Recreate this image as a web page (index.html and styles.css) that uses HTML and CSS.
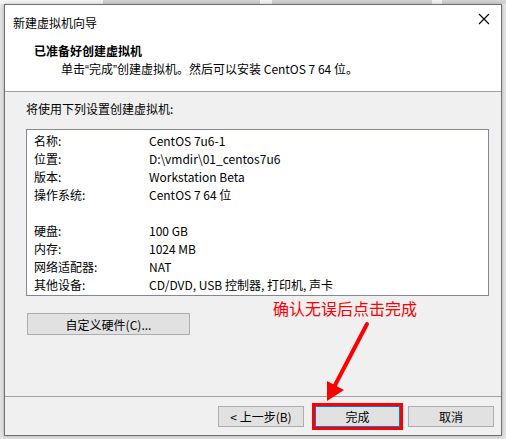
FILE: index.html
```html
<!DOCTYPE html>
<html lang="zh-CN">
<head>
    <meta charset="UTF-8">
    <title>新建虚拟机向导</title>
    <link rel="stylesheet" href="styles.css">
</head>
<body>

<div class="desk">
    <span class="tile tile-a"></span>
    <span class="tile tile-b"></span>
    <span class="tile tile-c"></span>
</div>

<div class="window">
    <div class="titlebar">
        <span class="title">新建虚拟机向导</span>
        <svg class="close" width="12" height="12" viewBox="0 0 12 12">
            <path d="M1 1 L11 11 M11 1 L1 11" stroke="#000" stroke-width="1.1" fill="none"/>
        </svg>
    </div>

    <div class="header">
        <div class="header-title">已准备好创建虚拟机</div>
        <div class="header-sub">单击<span class="q">“</span>完成<span class="q">”</span>创建虚拟机。然后可以安装 CentOS 7 64 位。</div>
    </div>

    <div class="body">
        <div class="intro">将使用下列设置创建虚拟机:</div>

        <div class="summary">
            <div class="row"><span class="key">名称:</span><span>CentOS 7u6-1</span></div>
            <div class="row"><span class="key">位置:</span><span>D:\vmdir\01_centos7u6</span></div>
            <div class="row"><span class="key">版本:</span><span>Workstation Beta</span></div>
            <div class="row"><span class="key">操作系统:</span><span>CentOS 7 64 位</span></div>
            <div class="row"></div>
            <div class="row"><span class="key">硬盘:</span><span>100 GB</span></div>
            <div class="row"><span class="key">内存:</span><span>1024 MB</span></div>
            <div class="row"><span class="key">网络适配器:</span><span>NAT</span></div>
            <div class="row"><span class="key">其他设备:</span><span>CD/DVD, USB 控制器, 打印机, 声卡</span></div>
        </div>

        <button class="btn btn-custom">自定义硬件(C)...</button>

        <div class="note">确认无误后点击完成</div>
        <svg class="arrow" width="60" height="90" viewBox="0 0 60 90">
            <path d="M55 3 L21 68" stroke="#ff0000" stroke-width="4" stroke-linecap="round" fill="none"/>
            <path d="M15 80 L15 60 L32 69 Z" fill="#ff0000"/>
        </svg>
    </div>

    <div class="footer">
        <button class="btn btn-back">&lt; 上一步(B)</button>
        <button class="btn btn-finish">完成</button>
        <button class="btn btn-cancel">取消</button>
    </div>
</div>

</body>
</html>
```

FILE: styles.css
```css
body {
    margin: 0;
    background-color: #e4e4e4;
    font-family: "Noto Sans CJK SC", "Microsoft YaHei", sans-serif;
    font-size: 12px;
    color: #000;
    width: 506px;
    height: 439px;
    overflow: hidden;
    position: relative;
}
.desk {
    height: 4px;
    background-color: #f6f6f6;
    position: relative;
}
.tile {
    position: absolute;
    top: 0;
    height: 4px;
    background-color: #d4d4d4;
}
.tile-a { left: 103px; width: 157px; }
.tile-b { left: 272px; width: 160px; }
.tile-c { left: 442px; width: 64px; }
.window {
    margin-left: 4px;
    width: 496px;
    height: 430px;
    border: 1px solid #6f6f6f;
    background-color: #f0f0f0;
    display: flex;
    flex-direction: column;
    position: relative;
    box-shadow: 0 0 4px rgba(0, 0, 0, 0.25);
}
.titlebar {
    height: 34px;
    background-color: #fff;
    display: flex;
    align-items: center;
    justify-content: space-between;
    padding: 0 8px 0 8px;
}
.title {
    margin-top: 1px;
}
.close {
    margin-top: -6px;
    margin-right: 3px;
}
.header {
    background-color: #fff;
    padding: 3px 0 12px 29px;
    border-bottom: 1px solid #a0a0a0;
    line-height: 18px;
}
.header-title {
    font-weight: bold;
}
.header-sub {
    padding-left: 27px;
}
.q {
    font-family: "Liberation Sans", Arial, sans-serif;
}
.body {
    flex: 1;
    padding: 8px 0 0 21px;
    position: relative;
    border-bottom: 1px solid #a0a0a0;
}
.intro {
    line-height: 18px;
}
.summary {
    margin-top: 11px;
    width: 461px;
    height: 165px;
    box-sizing: content-box;
    border: 1px solid #828790;
    background-color: #fff;
    padding: 0;
}
.summary .row {
    height: 18px;
    line-height: 18px;
    display: flex;
    padding-left: 7px;
}
.summary .row:first-child {
    margin-top: 2px;
}
.key {
    width: 115px;
}
.btn {
    font-family: inherit;
    font-size: 12px;
    background-color: #e1e1e1;
    border: 1px solid #adadad;
    color: #000;
    padding: 0;
    height: 21px;
}
.btn-custom {
    margin-top: 17px;
    margin-left: 1px;
    width: 163px;
    height: 22px;
}
.note {
    position: absolute;
    left: 268px;
    top: 205px;
    font-size: 16px;
    color: #ff0000;
    line-height: 22px;
}
.arrow {
    position: absolute;
    left: 307px;
    top: 229px;
}
.footer {
    height: 38px;
    display: flex;
    align-items: center;
    padding-left: 213px;
    box-sizing: border-box;
}
.btn-back {
    width: 86px;
}
.btn-finish {
    width: 85px;
    margin-left: 11px;
    border: 1px solid #0078d7;
    outline: 3px solid #ff0000;
    outline-offset: 0;
}
.btn-cancel {
    width: 86px;
    margin-left: 8px;
}
```
